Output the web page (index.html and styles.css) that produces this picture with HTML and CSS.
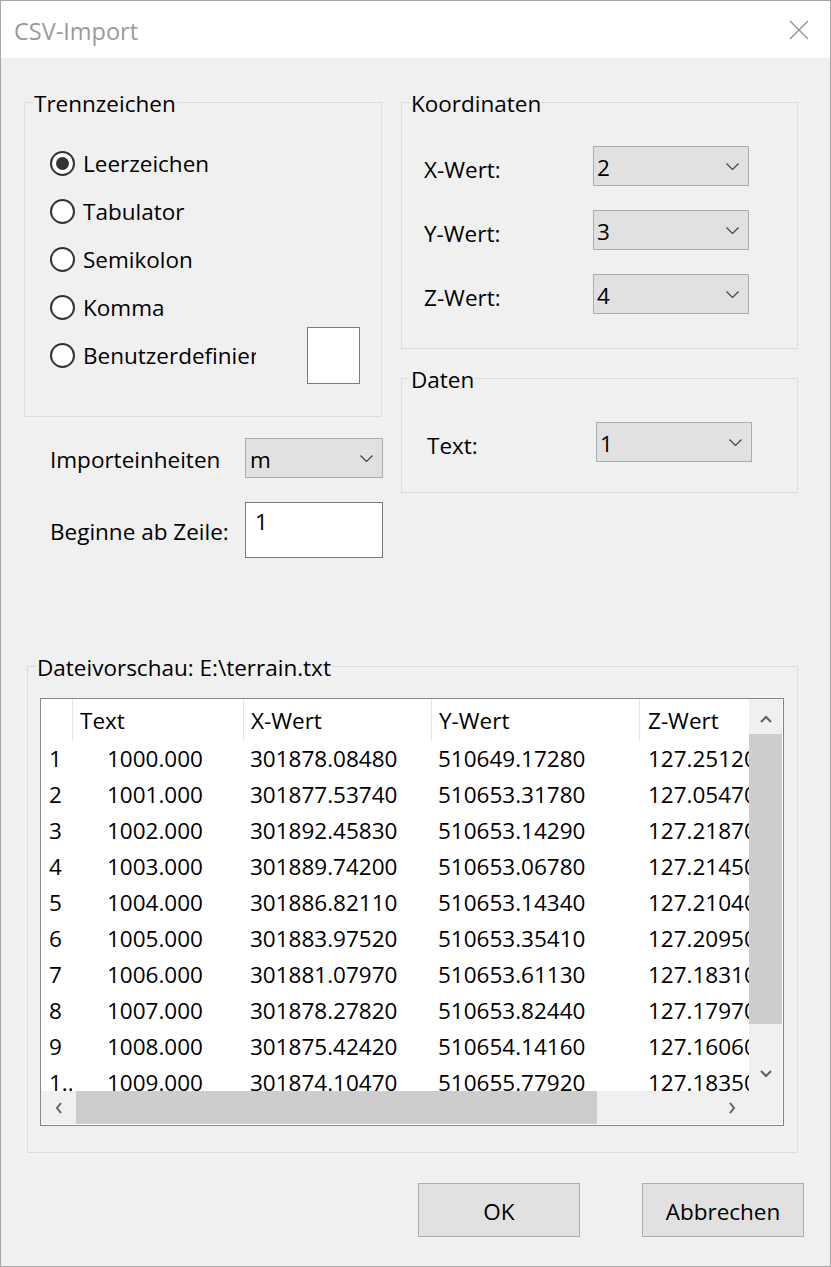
FILE: index.html
```html
<!DOCTYPE html>
<html lang="de">
<head>
<meta charset="utf-8">
<title>CSV-Import</title>
<link rel="stylesheet" href="styles.css">
</head>
<body>
<div class="window">
  <header class="titlebar">
    <span class="title">CSV-Import</span>
    <svg class="close" viewBox="0 0 20 20" aria-label="Schließen"><path d="M1 1L19 19M19 1L1 19"/></svg>
  </header>
  <main class="content">
    <div class="top">
      <div class="col-left">
        <fieldset class="group">
          <legend>Trennzeichen</legend>
          <div class="group-body sep-body">
            <div class="radio-row"><span class="radio checked"></span><span class="rlabel">Leerzeichen</span></div>
            <div class="radio-row"><span class="radio"></span><span class="rlabel">Tabulator</span></div>
            <div class="radio-row"><span class="radio"></span><span class="rlabel">Semikolon</span></div>
            <div class="radio-row"><span class="radio"></span><span class="rlabel">Komma</span></div>
            <div class="radio-row"><span class="radio"></span><span class="rlabel clip">Benutzerdefiniert</span><span class="custom-box"></span></div>
          </div>
        </fieldset>
        <div class="form-row units">
          <span class="flabel">Importeinheiten</span>
          <div class="combo narrow"><span class="ctext">m</span><svg class="chev" viewBox="0 0 13 7"><polyline points="0.5,0.5 6.5,6.5 12.5,0.5"/></svg></div>
        </div>
        <div class="form-row start">
          <span class="flabel">Beginne ab Zeile:</span>
          <div class="edit">1</div>
        </div>
      </div>
      <div class="col-right">
        <fieldset class="group">
          <legend>Koordinaten</legend>
          <div class="group-body coord-body">
            <div class="field-row"><span class="flabel2">X-Wert:</span><div class="combo"><span class="ctext">2</span><svg class="chev" viewBox="0 0 13 7"><polyline points="0.5,0.5 6.5,6.5 12.5,0.5"/></svg></div></div>
            <div class="field-row"><span class="flabel2">Y-Wert:</span><div class="combo"><span class="ctext">3</span><svg class="chev" viewBox="0 0 13 7"><polyline points="0.5,0.5 6.5,6.5 12.5,0.5"/></svg></div></div>
            <div class="field-row"><span class="flabel2">Z-Wert:</span><div class="combo"><span class="ctext">4</span><svg class="chev" viewBox="0 0 13 7"><polyline points="0.5,0.5 6.5,6.5 12.5,0.5"/></svg></div></div>
          </div>
        </fieldset>
        <fieldset class="group data">
          <legend>Daten</legend>
          <div class="group-body data-body">
            <div class="field-row"><span class="flabel2">Text:</span><div class="combo"><span class="ctext">1</span><svg class="chev" viewBox="0 0 13 7"><polyline points="0.5,0.5 6.5,6.5 12.5,0.5"/></svg></div></div>
          </div>
        </fieldset>
      </div>
    </div>

    <fieldset class="group preview">
      <legend>Dateivorschau: E:\terrain.txt</legend>
      <div class="group-body preview-body">
        <div class="listview">
          <div class="viewport">
            <div class="lv-header">
              <span class="hc c0"></span>
              <span class="hc c1">Text</span>
              <span class="hc c2">X-Wert</span>
              <span class="hc c3">Y-Wert</span>
              <span class="hc c4">Z-Wert</span>
            </div>
            <div class="lv-row"><span class="c0">1</span><span class="c1">1000.000</span><span class="c2">301878.08480</span><span class="c3">510649.17280</span><span class="c4">127.25120</span></div>
            <div class="lv-row"><span class="c0">2</span><span class="c1">1001.000</span><span class="c2">301877.53740</span><span class="c3">510653.31780</span><span class="c4">127.05470</span></div>
            <div class="lv-row"><span class="c0">3</span><span class="c1">1002.000</span><span class="c2">301892.45830</span><span class="c3">510653.14290</span><span class="c4">127.21870</span></div>
            <div class="lv-row"><span class="c0">4</span><span class="c1">1003.000</span><span class="c2">301889.74200</span><span class="c3">510653.06780</span><span class="c4">127.21450</span></div>
            <div class="lv-row"><span class="c0">5</span><span class="c1">1004.000</span><span class="c2">301886.82110</span><span class="c3">510653.14340</span><span class="c4">127.21040</span></div>
            <div class="lv-row"><span class="c0">6</span><span class="c1">1005.000</span><span class="c2">301883.97520</span><span class="c3">510653.35410</span><span class="c4">127.20950</span></div>
            <div class="lv-row"><span class="c0">7</span><span class="c1">1006.000</span><span class="c2">301881.07970</span><span class="c3">510653.61130</span><span class="c4">127.18310</span></div>
            <div class="lv-row"><span class="c0">8</span><span class="c1">1007.000</span><span class="c2">301878.27820</span><span class="c3">510653.82440</span><span class="c4">127.17970</span></div>
            <div class="lv-row"><span class="c0">9</span><span class="c1">1008.000</span><span class="c2">301875.42420</span><span class="c3">510654.14160</span><span class="c4">127.16060</span></div>
            <div class="lv-row"><span class="c0">1..</span><span class="c1">1009.000</span><span class="c2">301874.10470</span><span class="c3">510655.77920</span><span class="c4">127.18350</span></div>
          </div>
          <div class="vscroll">
            <div class="sbtn up"><svg class="arr-v" viewBox="0 0 12 8"><polyline points="1,7 6,2 11,7"/></svg></div>
            <div class="vtrack"><div class="vthumb"></div></div>
            <div class="sbtn down"><svg class="arr-v" viewBox="0 0 12 8"><polyline points="1,1 6,6 11,1"/></svg></div>
          </div>
          <div class="hscroll">
            <div class="sbtn left"><svg class="arr-h" viewBox="0 0 8 12"><polyline points="6,1 2,6 6,11"/></svg></div>
            <div class="htrack"><div class="hthumb"></div></div>
            <div class="sbtn right"><svg class="arr-h" viewBox="0 0 8 12"><polyline points="2,1 6,6 2,11"/></svg></div>
          </div>
          <div class="corner"></div>
        </div>
      </div>
    </fieldset>

    <div class="buttons">
      <button class="btn" type="button">OK</button>
      <button class="btn" type="button">Abbrechen</button>
    </div>
  </main>
</div>
</body>
</html>
```

FILE: styles.css
```css
* { box-sizing: border-box; }
html, body { margin: 0; padding: 0; background: #f0f0f0; }
body {
  font-family: "Open Sans", "Noto Sans", sans-serif;
  font-size: 22.5px;
  color: #000;
}

.window {
  width: 831px;
  height: 1267px;
  border: 1px solid #a6a6a6;
  background: #f0f0f0;
  display: flex;
  flex-direction: column;
  overflow: hidden;
}

/* title bar */
.titlebar {
  flex: none;
  height: 57px;
  background: #fff;
  display: flex;
  align-items: center;
  justify-content: space-between;
  padding: 0 21px 0 13px;
}
.title {
  color: #9a9a9a;
  font-size: 23.5px;
  line-height: 24px;
  padding-top: 3px;
}
.close {
  width: 20px;
  height: 20px;
  stroke: #8f8f8f;
  stroke-width: 1.3;
  fill: none;
}

/* content */
.content {
  flex: 1;
  padding: 32px 0 0 23px;
}
.top {
  display: flex;
  gap: 19px;
  align-items: flex-start;
}
.col-left { width: 358px; flex: none; }
.col-right { width: 397px; flex: none; }

fieldset.group {
  margin: 0;
  padding: 0;
  min-width: 0;
  border: 1px solid #dcdcdc;
}
fieldset.group legend {
  margin-left: 8px;
  padding: 2px 1px 0;
  height: 24px;
  line-height: 24px;
}

/* Trennzeichen */
.sep-body { padding: 25px 0 37px 25px; }
.radio-row {
  height: 48px;
  display: flex;
  align-items: center;
}
.radio {
  flex: none;
  width: 25px;
  height: 25px;
  border: 2px solid #333;
  border-radius: 50%;
  background: #fff;
  display: flex;
  align-items: center;
  justify-content: center;
}
.radio.checked::after {
  content: "";
  width: 13px;
  height: 13px;
  border-radius: 50%;
  background: #333;
}
.rlabel {
  margin-left: 8px;
  line-height: 24px;
  padding-top: 2px;
  white-space: nowrap;
}
.rlabel.clip {
  width: 173px;
  overflow: hidden;
  flex: none;
}
.custom-box {
  flex: none;
  margin-left: 51px;
  width: 53px;
  height: 57px;
  background: #fff;
  border: 1px solid #7a7a7a;
}

/* left form rows */
.form-row {
  display: flex;
  align-items: center;
  margin-left: 26px;
}
.form-row.units { margin-top: 21px; }
.form-row.start { margin-top: 24px; }
.flabel {
  width: 195px;
  flex: none;
  line-height: 24px;
  padding-top: 4px;
  white-space: nowrap;
}

.combo {
  flex: none;
  width: 156px;
  height: 40px;
  background: #e1e1e1;
  border: 1px solid #adadad;
  display: flex;
  align-items: center;
  justify-content: space-between;
  padding: 0 9px 0 3px;
}
.combo.narrow { width: 138px; padding-left: 4px; }
.ctext {
  line-height: 24px;
  padding-top: 4px;
}
.chev {
  width: 13px;
  height: 7px;
  fill: none;
  stroke: #3c3c3c;
  stroke-width: 1.1;
}

.edit {
  flex: none;
  width: 138px;
  height: 56px;
  background: #fff;
  border: 1px solid #7a7a7a;
  padding: 7px 0 0 9px;
  line-height: 24px;
}

/* right groups */
.coord-body { padding: 32px 0 34px 22px; }
fieldset.data { margin-top: 17px; }
.data-body { padding: 32px 0 30px 25px; }
.field-row {
  display: flex;
  align-items: center;
}
.field-row + .field-row { margin-top: 24px; }
.flabel2 {
  width: 169px;
  flex: none;
  line-height: 24px;
  padding-top: 7px;
}

/* preview */
fieldset.preview {
  margin: 96px 0 0 3px;
  width: 771px;
}
.preview-body { padding: 20px 0 26px 12px; }

.listview {
  width: 744px;
  height: 428px;
  border: 1px solid #828790;
  background: #fff;
  padding: 0 1px 1px 0;
  display: grid;
  grid-template-columns: 708px 33px;
  grid-template-rows: 392px 33px;
}
.viewport {
  overflow: hidden;
  background: #fff;
}
.lv-header, .lv-row {
  display: grid;
  grid-template-columns: 31px 171px 188px 208px 200px;
  white-space: nowrap;
}
.lv-header {
  height: 42px;
  padding-top: 1px;
}
.hc {
  border-left: 1px solid #e5e5e5;
  line-height: 41px;
  padding-left: 7px;
  overflow: hidden;
}
.hc.c0 { border-left: none; }
.hc.c4 { padding-left: 8px; }
.lv-row {
  height: 36px;
  line-height: 36px;
}
.lv-row span { overflow: hidden; }
.lv-row .c0 { padding-left: 8px; }
.lv-row .c1 { padding-left: 35px; }
.lv-row .c2 { padding-left: 7px; }
.lv-row .c3 { padding-left: 7px; }
.lv-row .c4 { padding-left: 9px; }

/* scrollbars */
.vscroll {
  background: #f0f0f0;
  display: flex;
  flex-direction: column;
}
.sbtn {
  display: flex;
  align-items: center;
  justify-content: center;
  flex: none;
}
.vscroll .up { height: 35px; padding-top: 4px; }
.vscroll .down { height: 34px; }
.vtrack { flex: 1; }
.vthumb { height: 290px; background: #cdcdcd; }
.hscroll {
  background: #f0f0f0;
  display: flex;
}
.hscroll .left, .hscroll .right { width: 35px; }
.htrack { flex: 1; }
.hthumb { width: 521px; height: 100%; background: #cdcdcd; }
.corner { background: #f0f0f0; }
.arr-v { width: 12px; height: 8px; }
.arr-h { width: 8px; height: 12px; }
.arr-v polyline, .arr-h polyline {
  fill: none;
  stroke: #606060;
  stroke-width: 2;
}

/* buttons */
.buttons {
  display: flex;
  justify-content: flex-end;
  gap: 62px;
  margin-top: 30px;
  padding-right: 26px;
}
.btn {
  width: 162px;
  height: 54px;
  background: #e1e1e1;
  border: 1px solid #adadad;
  font-family: inherit;
  font-size: 22.5px;
  color: #000;
  padding: 4px 0 0;
  line-height: 24px;
  margin: 0;
}
```
